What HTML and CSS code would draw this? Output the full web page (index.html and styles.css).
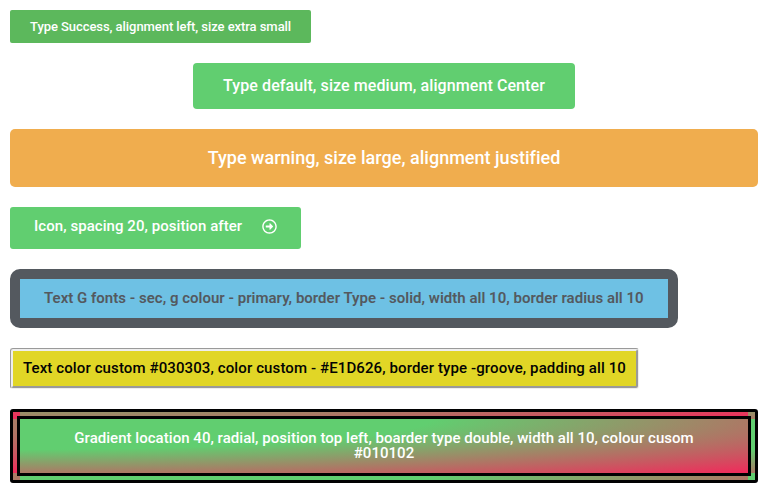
FILE: index.html
```html
<!DOCTYPE html>
<html lang="en">
<head>
<meta charset="utf-8">
<title>Buttons</title>
<link rel="stylesheet" href="styles.css">
</head>
<body>
<main class="stack">
<a class="btn success">Type Success, alignment left, size extra small</a>
<a class="btn medium">Type default, size medium, alignment Center</a>
<a class="btn warning">Type warning, size large, alignment justified</a>
<a class="btn with-icon"><span>Icon, spacing 20, position after</span><svg class="icon" viewBox="0 0 512 512"><path fill="currentColor" d="M504 256C504 119 393 8 256 8S8 119 8 256s111 248 248 248 248-111 248-248zm-448 0c0-110.500 89.500-200 200-200s200 89.500 200 200-89.500 200-200 200S56 366.500 56 256zm72 20v-40c0-6.600 5.400-12 12-12h116v-67c0-10.700 12.900-16 20.500-8.500l99 99c4.700 4.700 4.700 12.300 0 17l-99 99c-7.600 7.600-20.500 2.200-20.500-8.500v-67H140c-6.600 0-12-5.400-12-12z"/></svg></a>
<a class="btn solid">Text G fonts - sec, g colour - primary, border Type - solid, width all 10, border radius all 10</a>
<a class="btn groove">Text color custom #030303, color custom - #E1D626, border type -groove, padding all 10</a>
<a class="btn double">Gradient location 40, radial, position top left, boarder type double, width all 10, colour cusom #010102</a>
</main>
</body>
</html>
```
FILE: styles.css
```css
body {
  margin: 0;
  background: #fff;
  font-family: Roboto, sans-serif;
}
.stack {
  display: flex;
  flex-direction: column;
  align-items: flex-start;
  gap: 20px;
  padding: 10px;
}
.btn {
  box-sizing: border-box;
  padding: 12px 24px;
  border-radius: 3px;
  background-color: #61ce70;
  color: #fff;
  font-size: 15px;
  font-weight: 500;
  line-height: 1;
  text-align: center;
}
.success {
  padding: 10px 20px;
  border-radius: 2px;
  background-color: #5cb85c;
  font-size: 13px;
  letter-spacing: -0.06px;
}
.medium {
  align-self: center;
  padding: 15px 30px;
  border-radius: 4px;
  font-size: 16px;
  letter-spacing: 0.09px;
}
.warning {
  align-self: stretch;
  padding: 20px 40px;
  border-radius: 5px;
  background-color: #f0ad4e;
  font-size: 18px;
  letter-spacing: 0.02px;
}
.with-icon {
  display: flex;
  gap: 20px;
  padding-bottom: 15px;
  letter-spacing: 0.06px;
}
.icon {
  width: 15px;
  height: 15px;
}
.solid {
  border: 10px solid #54595f;
  border-radius: 10px;
  background-color: #6ec1e4;
  color: #54595f;
  font-weight: 600;
  letter-spacing: 0.012px;
}
.groove {
  padding: 10px;
  border: 3px groove #eee;
  background-color: #e1d626;
  color: #030303;
  letter-spacing: 0.112px;
}
.double {
  align-self: stretch;
  border: 10px double #010102;
  background-color: transparent;
  background-image: radial-gradient(at top left, #61ce70 40%, #f2295b 100%);
  letter-spacing: 0.035px;
}
```
